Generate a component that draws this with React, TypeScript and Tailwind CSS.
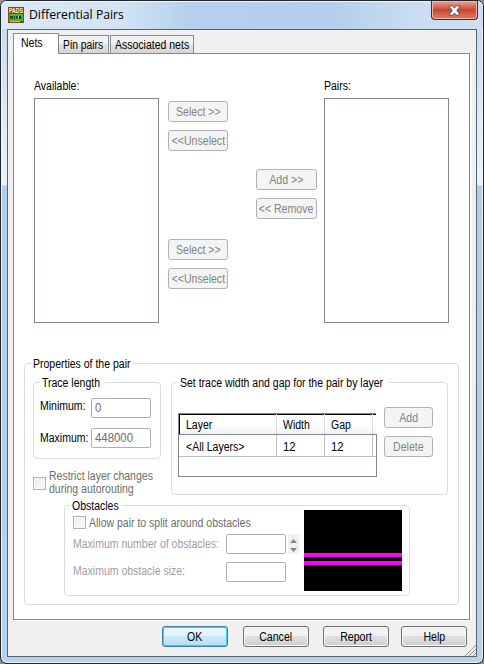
import React from "react";
import clsx from "clsx";

type TextProps = { children: React.ReactNode; className?: string };

// Condensed dialog font
function T({ children, className = "origin-left scale-x-[.875]" }: TextProps) {
  return (
    <span className={clsx("inline-block whitespace-nowrap", className)}>{children}</span>
  );
}

const digits = "origin-left scale-x-[.95]";

function DisabledButton({ children, className }: TextProps) {
  return (
    <button
      className={clsx(
        "flex h-[21px] shrink-0 items-center justify-center rounded-[3px] border border-[#adb2b5] bg-[#f4f4f4] text-[#838383]",
        className,
      )}
    >
      <T className="origin-center scale-x-[.88]">{children}</T>
    </button>
  );
}

function DialogButton({ children, className, primary }: TextProps & { primary?: boolean }) {
  return (
    <button
      className={clsx(
        "flex h-[21px] w-[66px] shrink-0 items-center justify-center rounded-[3px] border",
        primary
          ? "border-[#3c7fb1] bg-linear-to-b from-[#e5f5fd] from-45% via-[#c9e9f9] via-50% to-[#b5dff5] shadow-[inset_0_0_0_1px_#35cdf5]"
          : "border-[#707070] bg-linear-to-b from-[#f2f2f2] from-45% via-[#dfdfdf] via-50% to-[#cfcfcf] shadow-[inset_0_0_0_1px_#f8f8f8]",
        className,
      )}
    >
      <T className="origin-center scale-x-[.88]">{children}</T>
    </button>
  );
}

function Group({ title, legend, className, children }: { title: string; legend: string; className: string; children: React.ReactNode }) {
  return (
    <fieldset className={clsx("min-w-0 shrink-0 rounded-[4px] border border-[#d5dfe5]", className)}>
      <legend className={clsx("h-[13px] overflow-visible pt-px pl-[2px] leading-[13px]", legend)}>
        <T>{title}</T>
      </legend>
      {children}
    </fieldset>
  );
}

function Field({ value, className }: { value?: string; className?: string }) {
  return (
    <div className={clsx("flex h-[20px] w-[60px] shrink-0 items-center rounded-[2px] border border-[#afafaf] bg-white pl-[3px] text-[#6d6d6d]", className)}>
      <T className={digits}>{value}</T>
    </div>
  );
}

function CheckBox() {
  return (
    <div className="size-[13px] shrink-0 border border-[#b1b1b1] bg-linear-to-br from-[#ececec] to-[#fafafa] shadow-[inset_0_0_0_1px_#f8f8f8]" />
  );
}

function ListBox({ label }: { label: string }) {
  return (
    <div className="w-[125px] shrink-0">
      <div className="h-[18px] leading-[13px]"><T>{label}</T></div>
      <div className="h-[225px] border border-[#828790] bg-white" />
    </div>
  );
}

function TitleBar() {
  return (
    <header className="flex h-[28px] shrink-0 items-start rounded-t-[6px] bg-[linear-gradient(to_right,#dce8f5_0,#d3e3f4_120px,#b4d0ec_190px,#b2cfeb_330px,#cadcf0_410px,#cfdff1_100%)] shadow-[inset_0_1px_0_#eef5fc]">
      <svg className="mt-[6px] ml-[7px] size-[16px] shrink-0 overflow-visible" viewBox="0 0 16 16" shapeRendering="crispEdges">
        <rect width="16" height="16" fill="#8a4313" />
        <text x="1" y="6.2" fontSize="6.5" fontWeight="bold" fontFamily="Liberation Sans, sans-serif" fill="#fff4c8" textLength="14" lengthAdjust="spacingAndGlyphs">PADS</text>
        <rect x="1" y="7" width="14" height="7" fill="#4cb52f" />
        <rect x="2" y="9" width="3" height="3" fill="#1d5a17" />
        <rect x="6" y="9" width="1" height="3" fill="#123d0e" />
        <rect x="8" y="9" width="2" height="3" fill="#1d5a17" />
        <rect x="11" y="9" width="2" height="3" fill="#0d260b" />
        <rect x="10" y="9" width="1" height="3" fill="#9ee26d" />
        <rect x="2" y="14" width="10" height="1" fill="#d8c354" />
      </svg>
      <h1 className="mt-[5px] ml-[5px] grow font-['Open_Sans','Noto_Sans',sans-serif] text-[13px] leading-[17px] whitespace-nowrap text-black">
        <span className="inline-block origin-left scale-x-[.94]">Differential Pairs</span>
      </h1>
      <button className="mr-[5px] flex h-[19px] w-[47px] items-center justify-center rounded-b-[4px] border border-t-0 border-[#5c2020] bg-linear-to-b from-[#e3a79c] from-0% via-[#c9432b] via-50% to-[#d98068] shadow-[inset_0_0_0_1px_#eeb5a8]">
        <svg className="h-[11px] w-[13px]" viewBox="0 0 13 11">
          <path d="M1.5 .8h3.2L6.5 3 8.3.8h3.2V2L8.8 5.5l2.7 3.5v1.2H8.3L6.5 8l-1.8 2.2H1.5V9l2.7-3.5L1.5 2z" fill="#fff" stroke="#535666" />
        </svg>
      </button>
    </header>
  );
}

function Tabs() {
  const tab = "flex h-[18px] items-center border border-b-0 border-[#898c95] bg-linear-to-b from-[#f2f2f2] from-45% via-[#e4e4e4] via-50% to-[#d4d4d4] pl-[4px]";
  return (
    <nav className="flex h-[20px] shrink-0 items-end">
      <div className="z-10 -mb-px flex h-[21px] w-[46px] shrink-0 items-center border border-b-0 border-[#898c95] bg-white pb-[2px] pl-[7px]"><T>Nets</T></div>
      <div className={clsx(tab, "w-[50px] border-l-0")}><T className="origin-left scale-x-[.86]">Pin pairs</T></div>
      <div className={clsx(tab, "ml-px w-[84px]")}><T>Associated nets</T></div>
    </nav>
  );
}

function LayerTable() {
  return (
    <div className="mt-[18px] w-[199px] shrink-0">
      <div className="mr-px flex h-[21px] border-t border-l border-[#828790] bg-linear-to-b from-white from-50% to-[#f1f2f4] shadow-[inset_1px_1px_0_#000]">
        <div className="flex w-[98px] items-center border-r border-[#dedfe1] pt-[2px] pl-[7px]"><T>Layer</T></div>
        <div className="flex w-[48px] items-center border-r border-[#dedfe1] pt-[2px] pl-[6px]"><T>Width</T></div>
        <div className="flex w-[48px] items-center border-r border-[#dedfe1] pt-[2px] pl-[6px]"><T>Gap</T></div>
      </div>
      <div className="h-[43px] border border-[#828790]">
        <div className="flex h-[22px] w-[197px] border-b border-[#c0c0c0]">
          <div className="flex w-[98px] items-center border-r border-[#c0c0c0] pt-[2px] pl-[7px]"><T>&lt;All Layers&gt;</T></div>
          <div className="flex w-[48px] items-center border-r border-[#c0c0c0] pt-[2px] pl-[6px]"><T className={digits}>12</T></div>
          <div className="flex w-[48px] items-center border-r border-[#c0c0c0] pt-[2px] pl-[6px]"><T className={digits}>12</T></div>
        </div>
      </div>
    </div>
  );
}

function Obstacles() {
  return (
    <Group title="Obstacles" legend="ml-[5px] w-[52px]" className="mt-[4px] ml-[39px] h-[97px] w-[346px]">
      <div className="flex">
        <div className="ml-[8px] w-[231px] shrink-0">
          <div className="mt-[4px] flex h-[13px] items-center text-[#6d6d6d]">
            <CheckBox />
            <span className="ml-[3px]"><T>Allow pair to split around obstacles</T></span>
          </div>
          <div className="mt-[5px] flex h-[20px] items-center text-[#a0a0a0]">
            <div className="w-[153px] shrink-0"><T>Maximum number of obstacles:</T></div>
            <Field />
            <div className="ml-[2px] flex h-[20px] w-[11px] shrink-0 flex-col items-center justify-around bg-[#f0f0f0] pt-[2px]">
              <svg width="7" height="4"><path d="M0 4 3.5 0 7 4z" fill="#858585" /></svg>
              <svg width="7" height="4"><path d="M0 0 3.5 4 7 0z" fill="#858585" /></svg>
            </div>
          </div>
          <div className="mt-[8px] flex h-[20px] items-center text-[#a0a0a0]">
            <div className="w-[153px] shrink-0 pb-[2px]"><T>Maximum obstacle size:</T></div>
            <Field />
          </div>
        </div>
        <div className="-mt-[2px] h-[81px] w-[98px] shrink-0 bg-black pt-[43px]">
          <div className="h-[4px] bg-[#ff00ff]" />
          <div className="mt-[4px] h-[4px] bg-[#ff00ff]" />
        </div>
      </div>
    </Group>
  );
}

function NetsPanel() {
  return (
    <main className="h-[567px] w-[457px] shrink-0 border border-[#828790] bg-white shadow-[2px_1px_0_#fff]">
      <div className="flex h-[303px] pt-[26px] pl-[20px]">
        <ListBox label="Available:" />
        <div className="ml-[9px] w-[60px] shrink-0 pt-[21px]">
          <DisabledButton className="w-[60px]">Select &gt;&gt;</DisabledButton>
          <DisabledButton className="mt-[8px] w-[60px]">&lt;&lt;Unselect</DisabledButton>
          <DisabledButton className="mt-[88px] w-[60px]">Select &gt;&gt;</DisabledButton>
          <DisabledButton className="mt-[8px] w-[60px]">&lt;&lt;Unselect</DisabledButton>
        </div>
        <div className="mr-[7px] ml-[28px] w-[61px] shrink-0 pt-[89px]">
          <DisabledButton className="w-[61px]">Add &gt;&gt;</DisabledButton>
          <DisabledButton className="mt-[8px] w-[61px]">&lt;&lt; Remove</DisabledButton>
        </div>
        <ListBox label="Pairs:" />
      </div>
      <Group title="Properties of the pair" legend="ml-[6px] w-[102px]" className="ml-[10px] h-[248px] w-[435px]">
        <div className="flex h-[125px] pt-[6px] pl-[8px]">
          <div className="w-[138px] shrink-0">
            <Group title="Trace length" legend="ml-[6px] w-[65px]" className="h-[83px] w-[128px]">
              <div className="mt-[9px] flex h-[20px] items-center">
                <div className="w-[57px] shrink-0 pb-[4px] pl-[6px]"><T>Minimum:</T></div><Field value="0" />
              </div>
              <div className="mt-[10px] flex h-[20px] items-center">
                <div className="w-[57px] shrink-0 pb-px pl-[6px]"><T>Maximum:</T></div><Field value="448000" />
              </div>
            </Group>
            <div className="mt-[11px] flex items-center leading-[13px] text-[#6d6d6d]">
              <CheckBox />
              <div className="ml-[3px] w-[100px]">
                <div className="h-[13px]"><T>Restrict layer changes</T></div>
                <div className="h-[13px]"><T>during autorouting</T></div>
              </div>
            </div>
          </div>
          <Group title="Set trace width and gap for the pair by layer" legend="ml-[6px] w-[210px]" className="h-[119px] w-[277px]">
            <div className="flex pl-[6px]">
              <div className="pt-[6px]"><LayerTable /></div>
              <div className="ml-[7px] pt-[18px]">
                <DisabledButton className="w-[49px]">Add</DisabledButton>
                <DisabledButton className="mt-[8px] w-[49px]">Delete</DisabledButton>
              </div>
            </div>
          </Group>
        </div>
        <Obstacles />
      </Group>
    </main>
  );
}

export default function App() {
  return (
    <div className="h-[664px] w-[484px] overflow-hidden bg-[#8d8d8d]">
      <div className="flex h-[664px] w-[484px] flex-col rounded-[7px] border border-[#20242b] bg-[linear-gradient(to_bottom,#c6daef_0,#c9dcf0_30px,#dce9f6_110px,#eaf2fa_184px,#b2cde9_185px,#b8d1ec_100%)] font-['Liberation_Sans',Arial,sans-serif] text-[12px] leading-[14px] text-black shadow-[inset_0_0_0_1px_#eef5fc]">
        <TitleBar />
        <div className="ml-[6px] flex h-[628px] w-[470px] flex-col border border-[#56636f] bg-[#f0f0f0] pt-[3px] pl-[5px]">
          <Tabs />
          <NetsPanel />
          <footer className="mt-[6px] flex h-[30px] shrink-0 pl-[149px]">
            <DialogButton primary>OK</DialogButton>
            <DialogButton className="ml-[15px]">Cancel</DialogButton>
            <DialogButton className="ml-[14px]">Report</DialogButton>
            <DialogButton className="ml-[12px]">Help</DialogButton>
            <svg className="mt-[18px] -ml-[3px] size-[12px] shrink-0" viewBox="0 0 12 12" stroke="#929292">
              <path d="M1 12 12 1M5 12l7-7M9 12l3-3" />
            </svg>
          </footer>
        </div>
      </div>
    </div>
  );
}
